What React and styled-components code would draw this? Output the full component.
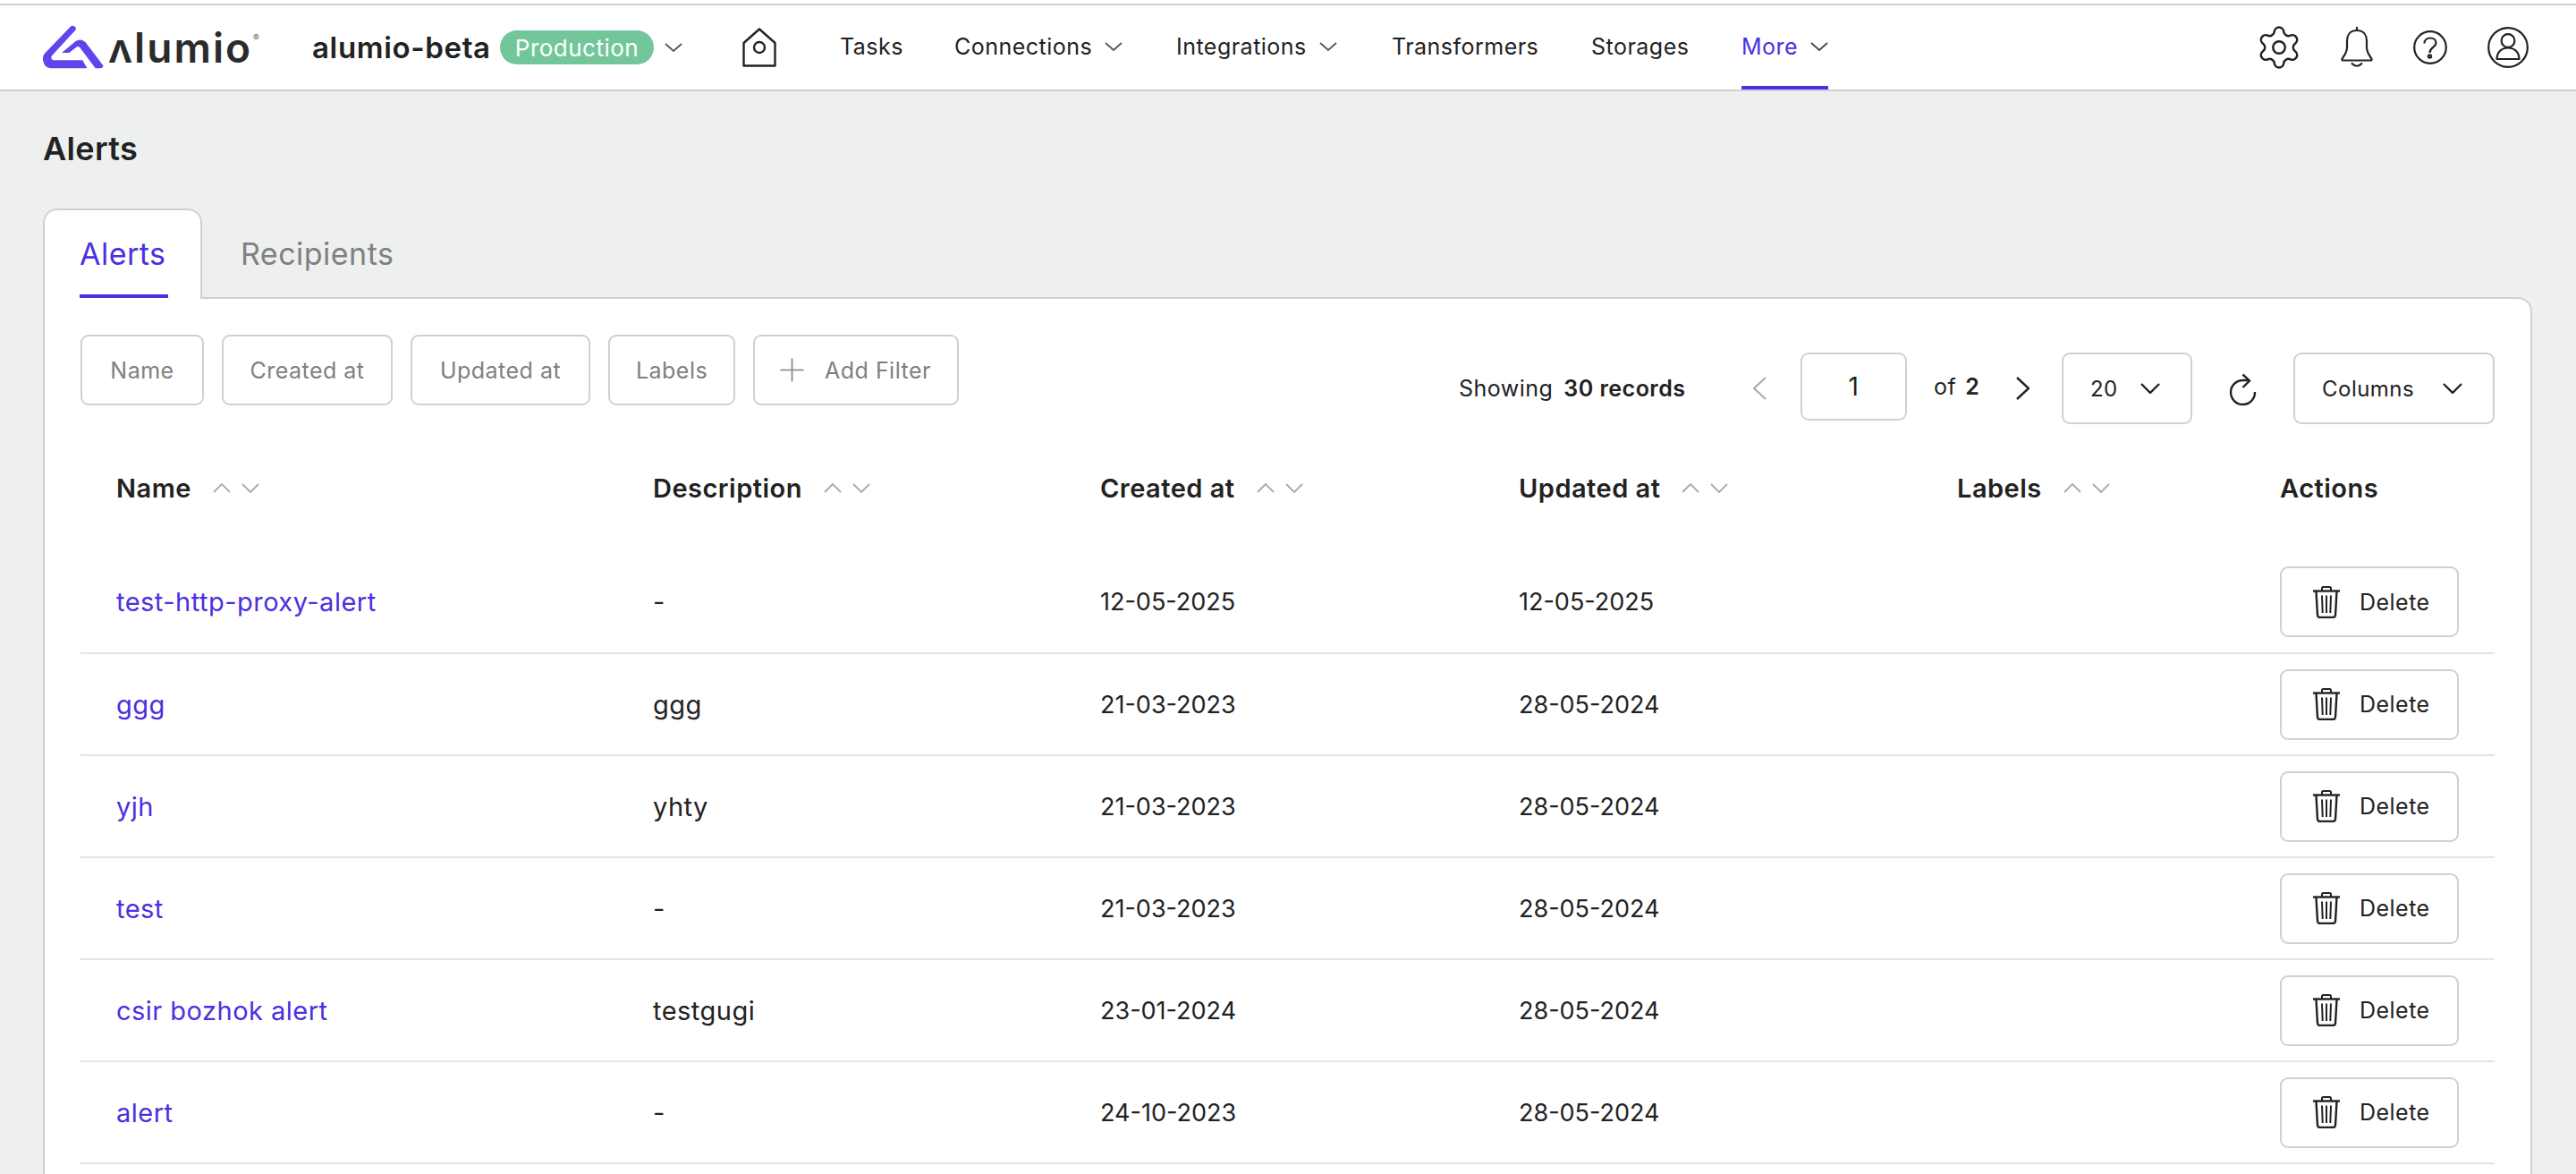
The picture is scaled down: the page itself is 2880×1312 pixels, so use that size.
import React from 'react'
import styled, { createGlobalStyle } from 'styled-components'
import { Settings, Plus } from 'lucide-react'

const purple = '#4a30df'
const ink = '#222222'
const grey = '#808080'
const line = '#d0d0d0'

const GlobalStyle = createGlobalStyle`
  html, body { margin: 0; padding: 0; background: #eef0ef; }
  body { font-family: Inter, "Open Sans", sans-serif; color: ${ink}; letter-spacing: 0.03em; }
  #root { height: 1312px; overflow: hidden; }
`

const Header = styled.header`
  height: 102px;
  box-sizing: border-box;
  background: #fff;
  padding-top: 4px;
`
const HeaderInner = styled.div`
  height: 98px;
  box-sizing: border-box;
  border-top: 2px solid ${line};
  border-bottom: 2px solid ${line};
  display: flex;
  align-items: stretch;
  padding-left: 48px;
`
const Logo = styled.div`
  width: 301px;
  display: flex;
  align-items: center;
  gap: 1px;
  svg { margin-left: -4px; }
`
const LogoWord = styled.span`
  font-size: 46px;
  font-weight: 600;
  line-height: 1;
  letter-spacing: 0.045em;
  color: #2b2b2b;
  sup { font-size: 10px; font-weight: 400; color: #666; vertical-align: 24px; margin-left: 1px; letter-spacing: 0; }
`
const Brand = styled.div`
  width: 481px;
  display: flex;
  align-items: center;
`
const BrandName = styled.span`
  width: 210px;
  font-size: 33px;
  font-weight: 600;
  letter-spacing: 0.02em;
`
const EnvPill = styled.span`
  width: 172px;
  height: 38px;
  border-radius: 19px;
  background: #72c69a;
  color: #fff;
  font-size: 26px;
  display: flex;
  align-items: center;
  justify-content: center;
  margin-right: 12px;
`
const HomeLink = styled.div`
  width: 109px;
  display: flex;
  align-items: center;
`
const Nav = styled.nav`
  display: flex;
  flex: 1;
`
const NavItem = styled.div`
  width: ${p => p.$w}px;
  flex: none;
  display: flex;
  align-items: center;
`
const NavLabel = styled.span`
  height: 100%;
  box-sizing: border-box;
  display: flex;
  align-items: center;
  gap: 14px;
  font-size: 25px;
  padding-top: 2px;
  color: ${p => (p.$active ? purple : ink)};
  border-bottom: 4px solid ${p => (p.$active ? purple : 'transparent')};
`
const IconBar = styled.div`
  display: flex;
  align-items: center;
  padding-right: 53px;
  svg { display: block; }
`
const IconSlot = styled.div`
  margin-left: ${p => p.$ml}px;
`
const Main = styled.main`
  padding: 0 49px 0 48px;
`
const Title = styled.h1`
  margin: 0 0 43px;
  padding-top: 40px;
  font-size: 36px;
  line-height: 48px;
  font-weight: 600;
  letter-spacing: 0.01em;
`
const Tabs = styled.div`
  display: flex;
  height: 101px;
  position: relative;
  z-index: 1;
  margin-bottom: -2px;
`
const ActiveTab = styled.div`
  width: 178px;
  box-sizing: border-box;
  background: #fff;
  border: 2px solid ${line};
  border-bottom: 0;
  border-radius: 16px 16px 0 0;
  padding-left: 39px;
`
const TabLabel = styled.div`
  width: ${p => p.$w}px;
  height: 98px;
  box-sizing: border-box;
  padding-top: 2px;
  display: flex;
  align-items: center;
  font-size: 34px;
  color: ${p => (p.$active ? purple : grey)};
  border-bottom: 4px solid ${p => (p.$active ? purple : 'transparent')};
`
const TabPlain = styled.div`
  margin-left: 43px;
  padding-top: 2px;
`
const Card = styled.section`
  background: #fff;
  border: 2px solid ${line};
  border-radius: 0 16px 0 0;
  padding: 40px 40px 0;
  height: 1100px;
  box-sizing: border-box;
`
const Toolbar = styled.div`
  display: flex;
  justify-content: space-between;
  height: 100px;
`
const Filters = styled.div`
  display: flex;
  gap: 20px;
`
const Chip = styled.div`
  width: ${p => p.$w}px;
  height: 79px;
  box-sizing: border-box;
  border: 2px solid ${line};
  border-radius: 9px;
  display: flex;
  align-items: center;
  justify-content: center;
  gap: 15px;
  font-size: 25px;
  color: ${grey};
  svg { margin-left: -9px; }
`
const Pager = styled.div`
  display: flex;
  align-items: center;
  height: 80px;
  margin-top: 20px;
  font-size: 24px;
`
const RecordCount = styled.div`
  width: 329px;
  font-size: 25px;
  b { font-weight: 600; margin-left: 12px; }
`
const PagerArrow = styled.div`
  width: ${p => p.$w}px;
  display: flex;
  align-items: center;
`
const PageInput = styled.div`
  width: 119px;
  height: 76px;
  align-self: flex-start;
  box-sizing: border-box;
  border: 2px solid ${line};
  border-radius: 9px;
  display: flex;
  align-items: center;
  justify-content: center;
  font-size: 28px;
`
const PageOf = styled.div`
  width: 92px;
  margin-left: 30px;
  padding-bottom: 4px;
  font-size: 25px;
  b { font-weight: 600; margin-left: 10px; }
`
const SelectBox = styled.div`
  width: ${p => p.$w}px;
  height: 80px;
  box-sizing: border-box;
  border: 2px solid ${line};
  border-radius: 9px;
  padding: 0 34px 0 30px;
  display: flex;
  align-items: center;
  justify-content: space-between;
`
const RefreshSlot = styled.div`
  width: 36px;
  margin: 0 38px 0 39px;
  svg { display: block; }
`
const Row = styled.div`
  display: grid;
  grid-template-columns: 600px 500px 468px 490px 361px 1fr;
  padding-left: 40px;
  align-items: center;
  height: ${p => p.$h}px;
  box-sizing: border-box;
  border-bottom: ${p => (p.$head ? '0' : '2px solid #e1e5e7')};
  font-size: 29px;
`
const HeadCell = styled.div`
  display: flex;
  align-items: center;
  gap: 24px;
  font-weight: 600;
`
const SortArrows = styled.span`
  display: flex;
  gap: 12px;
`
const RowLink = styled.a`
  color: ${purple};
`
const DateCell = styled.div`
  font-size: 27px;
  letter-spacing: 0;
`
const DeleteButton = styled.button`
  width: 200px;
  height: 79px;
  box-sizing: border-box;
  background: #fff;
  border: 2px solid ${line};
  border-radius: 9px;
  padding: 0 0 0 35px;
  display: flex;
  align-items: center;
  gap: 22px;
  font-family: inherit;
  letter-spacing: inherit;
  font-size: 25px;
  color: ${ink};
`

const Chevron = ({ dir = 'down', w = 20, h = 10, color = '#555', sw = 1.8 }) => {
  const paths = {
    down: `M1 1L${w / 2} ${h - 1}L${w - 1} 1`,
    up: `M1 ${h - 1}L${w / 2} 1L${w - 1} ${h - 1}`,
    left: `M${w - 1} 1L1 ${h / 2}L${w - 1} ${h - 1}`,
    right: `M1 1L${w - 1} ${h / 2}L1 ${h - 1}`,
  }
  return (
    <svg width={w} height={h} viewBox={`0 0 ${w} ${h}`} fill="none" stroke={color} strokeWidth={sw}>
      <path d={paths[dir]} />
    </svg>
  )
}

const LogoMark = () => (
  <svg width="76" height="58" viewBox="0 0 228 174" fill="#5f45ec">
    <path d="M106 16Q115 11 122 20Q125 26 118 32L42 115Q36 125 46 130H145L160 157H38Q16 155 12 130Q10 115 20 105Z" />
    <path d="M75 105L122 66Q140 55 155 70L214 148Q215 155 205 157H188L135 86Q130 82 124 86L100 105Z" />
  </svg>
)

const HomeIcon = () => (
  <svg width="38" height="44" viewBox="0 0 38 44" fill="none" stroke="#222" strokeWidth="2.4" strokeLinejoin="round">
    <path d="M19 1.5L1.5 17V42.5H36.5V17Z" />
    <circle cx="19" cy="22" r="6" />
  </svg>
)

const BellIcon = () => (
  <svg width="36" height="46" viewBox="0 0 36 46" fill="none" stroke="#222" strokeWidth="2.2">
    <path d="M18 0V4M18 4C10 4 7 10 7 16V23C7 29 3 33 1.5 36Q1 37.5 3 37.5H33Q35 37.5 34.5 36C33 33 29 29 29 23V16C29 10 26 4 18 4Z" />
    <path d="M12 40.5Q18 47 24 40.5" />
  </svg>
)

const HelpIcon = () => (
  <svg width="38" height="38" viewBox="0 0 38 38" fill="none" stroke="#222" strokeWidth="2.2">
    <circle cx="19" cy="19" r="17.8" />
    <path d="M12.5 14.5C12.5 10.5 15.5 8.5 19 8.5C23 8.5 25.5 11 25.5 14C25.5 18.5 18.5 19 18.5 25" />
    <circle cx="18.5" cy="29" r="1.6" />
  </svg>
)

const UserIcon = () => (
  <svg width="46" height="46" viewBox="0 0 46 46" fill="none" stroke="#222" strokeWidth="2.2">
    <circle cx="23" cy="23" r="21.8" />
    <circle cx="23" cy="15.5" r="7.4" />
    <path d="M10.5 36C10.5 28 16 23.5 23 23.5C30 23.5 35.5 28 35.5 36Z" strokeLinejoin="round" />
  </svg>
)

const RefreshIcon = () => (
  <svg width="36" height="40" viewBox="30 22 36 40" fill="none" stroke="#222" strokeWidth="2.4">
    <path d="M61 46A13.5 13.5 0 1 1 48 33H54" />
    <path d="M47.5 26.5L55 33.5L47.5 41" />
  </svg>
)

const TrashIcon = () => (
  <svg width="30" height="36" viewBox="0 0 30 36" fill="none" stroke="#222" strokeWidth="2">
    <path d="M0 5.5H30" strokeWidth="2.4" />
    <path d="M10 5V2.5Q10 1 11.5 1H18.5Q20 1 20 2.5V5" />
    <path d="M3.5 6L5 32.5Q5.2 35 8 35H22Q24.8 35 25 32.5L26.5 6" strokeWidth="2.4" />
    <path d="M10 10.5L10.7 30M15 10.5V30M20 10.5L19.3 30" />
  </svg>
)

const columns = [
  { label: 'Name', sort: true },
  { label: 'Description', sort: true },
  { label: 'Created at', sort: true },
  { label: 'Updated at', sort: true },
  { label: 'Labels', sort: true },
  { label: 'Actions' },
]

const alerts = [
  { name: 'test-http-proxy-alert', description: '-', created: '12-05-2025', updated: '12-05-2025' },
  { name: 'ggg', description: 'ggg', created: '21-03-2023', updated: '28-05-2024' },
  { name: 'yjh', description: 'yhty', created: '21-03-2023', updated: '28-05-2024' },
  { name: 'test', description: '-', created: '21-03-2023', updated: '28-05-2024' },
  { name: 'csir bozhok alert', description: 'testgugi', created: '23-01-2024', updated: '28-05-2024' },
  { name: 'alert', description: '-', created: '24-10-2023', updated: '28-05-2024' },
]

const navItems = [
  { label: 'Tasks', w: 128 },
  { label: 'Connections', w: 248, menu: true },
  { label: 'Integrations', w: 241, menu: true },
  { label: 'Transformers', w: 223 },
  { label: 'Storages', w: 168 },
  { label: 'More', w: 100, menu: true, active: true },
]

const filters = [
  { label: 'Name', w: 138 },
  { label: 'Created at', w: 191 },
  { label: 'Updated at', w: 201 },
  { label: 'Labels', w: 142 },
]

const App = () => (
  <>
    <GlobalStyle />
    <Header>
      <HeaderInner>
        <Logo>
          <LogoMark />
          <LogoWord>ʌlumio<sup>®</sup></LogoWord>
        </Logo>
        <Brand>
          <BrandName>alumio-beta</BrandName>
          <EnvPill>Production</EnvPill>
          <Chevron />
        </Brand>
        <HomeLink><HomeIcon /></HomeLink>
        <Nav>
          {navItems.map(item => (
            <NavItem key={item.label} $w={item.w}>
              <NavLabel $active={item.active}>
                {item.label}
                {item.menu && <Chevron color={item.active ? '#444' : '#555'} />}
              </NavLabel>
            </NavItem>
          ))}
        </Nav>
        <IconBar>
          <Settings size={54} strokeWidth={1.1} color="#222" />
          <IconSlot $ml={42}><BellIcon /></IconSlot>
          <IconSlot $ml={45}><HelpIcon /></IconSlot>
          <IconSlot $ml={45}><UserIcon /></IconSlot>
        </IconBar>
      </HeaderInner>
    </Header>
    <Main>
      <Title>Alerts</Title>
      <Tabs>
        <ActiveTab><TabLabel $active $w={99}>Alerts</TabLabel></ActiveTab>
        <TabPlain><TabLabel>Recipients</TabLabel></TabPlain>
      </Tabs>
      <Card>
        <Toolbar>
          <Filters>
            {filters.map(f => <Chip key={f.label} $w={f.w}>{f.label}</Chip>)}
            <Chip $w={230}><Plus size={43} strokeWidth={0.9} />Add Filter</Chip>
          </Filters>
          <Pager>
            <RecordCount>Showing<b>30 records</b></RecordCount>
            <PagerArrow $w={53}><Chevron dir="left" w={15} h={26} color="#aaa" sw={2} /></PagerArrow>
            <PageInput>1</PageInput>
            <PageOf>of<b>2</b></PageOf>
            <PagerArrow $w={51}><Chevron dir="right" w={15} h={26} color="#222" sw={2.4} /></PagerArrow>
            <SelectBox $w={146}>20<Chevron w={22} h={12} color="#222" sw={2.4} /></SelectBox>
            <RefreshSlot><RefreshIcon /></RefreshSlot>
            <SelectBox $w={225}>Columns<Chevron w={22} h={12} color="#222" sw={2.4} /></SelectBox>
          </Pager>
        </Toolbar>
        <Row $head $h={142}>
          {columns.map(col => (
            <HeadCell key={col.label}>
              {col.label}
              {col.sort && (
                <SortArrows>
                  <Chevron dir="up" w={20} h={11} color="#aaa" />
                  <Chevron w={20} h={11} color="#aaa" />
                </SortArrows>
              )}
            </HeadCell>
          ))}
        </Row>
        {alerts.map((alert, i) => (
          <Row key={alert.name} $h={i === 0 ? 115 : 114}>
            <div><RowLink>{alert.name}</RowLink></div>
            <div>{alert.description}</div>
            <DateCell>{alert.created}</DateCell>
            <DateCell>{alert.updated}</DateCell>
            <div />
            <DeleteButton><TrashIcon />Delete</DeleteButton>
          </Row>
        ))}
      </Card>
    </Main>
  </>
)

export default App
